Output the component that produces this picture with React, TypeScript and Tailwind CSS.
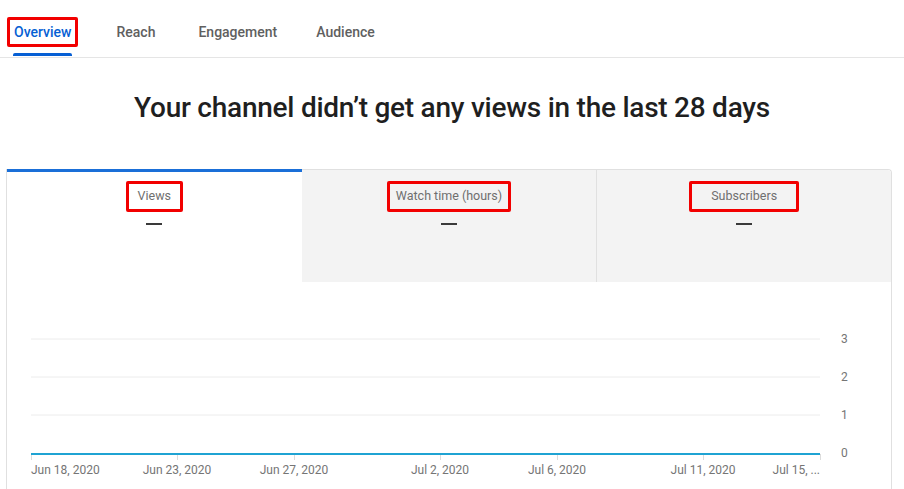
import React from "react";

const tabs = ["Overview", "Reach", "Engagement", "Audience"];

const stats = [
  { label: "Views", active: true, pad: "px-[9px]" },
  { label: "Watch time (hours)", active: false, pad: "px-[6px]" },
  { label: "Subscribers", active: false, pad: "px-[19px]" },
];

// x positions along the plot (0..789)
const dates = [
  { label: "Jun 18, 2020", x: 0, align: "left" },
  { label: "Jun 23, 2020", x: 146, align: "center" },
  { label: "Jun 27, 2020", x: 263, align: "center" },
  { label: "Jul 2, 2020", x: 409, align: "center" },
  { label: "Jul 6, 2020", x: 526, align: "center" },
  { label: "Jul 11, 2020", x: 672, align: "center" },
  { label: "Jul 15, ...", x: 789, align: "right" },
];

const gridY = [57, 95, 133];

const tabMargin = ["ml-[14px]", "ml-[45px]", "ml-[43px]", "ml-[39px]"];

const App: React.FC = () => {
  return (
    <div
      className="w-[904px] h-[489px] overflow-hidden bg-white"
      style={{ fontFamily: "Roboto, 'Liberation Sans', sans-serif" }}
    >
      {/* top tabs */}
      <div className="h-[58px] border-b border-[#e5e5e5] flex">
        {tabs.map((t, i) => (
          <div
            key={t}
            className={
              "relative h-full pt-[24px] text-[14px] leading-[16px] font-medium " +
              tabMargin[i] +
              (i === 0 ? " text-[#065fd4]" : " text-[#606060]")
            }
          >
            <span className="relative">
              {i === 0 && (
                <span className="absolute -left-[7px] -right-[7px] -top-[7px] -bottom-[7px] border-[3px] border-[#f20000] rounded-[2px]" />
              )}
              {t}
            </span>
            {i === 0 && (
              <span className="absolute left-[-1px] right-[-1px] bottom-[1px] h-[3px] bg-[#065fd4] rounded-t-[2px]" />
            )}
          </div>
        ))}
      </div>

      {/* heading */}
      <h1 className="mt-[34px] text-center text-[28px] leading-[32px] font-medium text-[#1f1f1f] tracking-[-0.25px]">
        Your channel didn’t get any views in the last 28 days
      </h1>

      {/* card */}
      <div className="mt-[45px] ml-[6px] w-[886px] border border-b-0 border-[#e0e0e0] rounded-tr-[4px]">
        <div className="grid grid-cols-3 h-[112px]">
          {stats.map((s, i) => (
            <div
              key={s.label}
              className={
                "flex flex-col items-center " +
                (s.active
                  ? "bg-white border-t-[3px] border-[#1a6fd8] -mt-px pt-[9px]"
                  : "bg-[#f3f3f3] pt-[11px]") +
                (i === 2 ? " border-l border-[#e0e0e0] rounded-tr-[4px]" : "")
              }
            >
              <span
                className={
                  "border-[3px] border-[#f20000] rounded-[2px] h-[31px] flex items-center text-[12.5px] text-[#6f6f6f] " +
                  s.pad
                }
              >
                {s.label}
              </span>
              <span className="mt-[11px] w-[16px] h-[2px] bg-[#3a3a3a]" />
            </div>
          ))}
        </div>

        {/* chart */}
        <div className="flex pl-[24px] h-[210px]">
          <div className="relative w-[789px]">
            <svg className="block" width="790" height="180">
              {gridY.map((y) => (
                <line key={y} x1="0" x2="789" y1={y} y2={y} stroke="#ececec" strokeWidth="1" />
              ))}
              {dates.map((d) => (
                <line
                  key={d.label}
                  x1={d.x + 0.5}
                  x2={d.x + 0.5}
                  y1="172"
                  y2="178"
                  stroke="#dcdcdc"
                  strokeWidth="1"
                />
              ))}
              <line x1="0" x2="789" y1="172" y2="172" stroke="#1fa3d3" strokeWidth="2" />
            </svg>
            {dates.map((d) => (
              <span
                key={d.label}
                className={
                  "absolute top-[181px] text-[12px] leading-[14px] text-[#757575] whitespace-nowrap " +
                  (d.align === "center" ? "-translate-x-1/2" : d.align === "right" ? "-translate-x-full" : "")
                }
                style={{ left: d.x }}
              >
                {d.label}
              </span>
            ))}
          </div>

          {/* y axis */}
          <div className="ml-[21px] pt-[50px] flex flex-col gap-[24px] text-[12px] leading-[14px] text-[#757575]">
            {["3", "2", "1", "0"].map((v) => (
              <span key={v}>{v}</span>
            ))}
          </div>
        </div>
      </div>
    </div>
  );
};

export default App;
